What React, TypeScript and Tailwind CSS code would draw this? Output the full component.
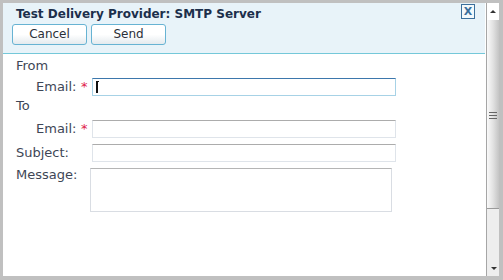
export default function App() {
  const font = { fontFamily: '"DejaVu Sans", Verdana, sans-serif' };

  return (
    <div
      className="w-[503px] h-[280px] bg-[#c0c0c0] pt-[3px] pl-[3px] pr-[4px] pb-[4px] flex overflow-hidden text-[13px] text-[#3e4656]"
      style={font}
    >
      {/* dialog */}
      <div className="flex-1 flex flex-col bg-white">
        <div className="h-[51px] bg-[#e8f3f9] border-b border-[#74c8d9] mr-px relative">
          <div className="pl-[13px] pt-[2px] h-[20px] font-bold text-[12px] text-[#1c2f4b] leading-[18px]">
            Test Delivery Provider: SMTP Server
          </div>
          <div className="flex gap-[4px] pl-[9px] pt-px">
            {["Cancel", "Send"].map((b) => (
              <button
                key={b}
                className="w-[75px] h-[21px] rounded-[3px] border border-[#67b3d3] bg-gradient-to-b from-white via-white to-[#e4eaee] text-[#2b2f38] text-[12px] leading-[17px]"
              >
                {b}
              </button>
            ))}
          </div>
          <div className="absolute left-[458px] top-[1px] w-[14px] h-[15px] border border-[#3b6f9c] bg-[#f3f9fc] text-[#3b6f9c] font-bold text-[11px] leading-[13px] text-center">
            X
          </div>
        </div>

        <div className="pl-[13px] pt-[3px]">
          <div className="h-[18px] leading-[18px]">From</div>

          <div className="flex items-center mt-[3px] h-[18px]">
            <div className="w-[44px] pl-[20px] shrink-0 box-content">Email:</div>
            <span className="text-[#e0214a] w-[12px] pl-[1px] shrink-0">*</span>
            <div className="w-[304px] h-[18px] border border-[#a7d2e6] border-t-[#3d77ac] relative">
              <div className="absolute left-[3px] top-[2px] w-[3px] h-[12px] border-l-2 border-t border-[#111]" />
            </div>
          </div>

          <div className="h-[20px] leading-[20px]">To</div>

          <div className="flex items-center mt-[4px] h-[18px]">
            <div className="w-[44px] pl-[20px] shrink-0 box-content">Email:</div>
            <span className="text-[#e0214a] w-[12px] pl-[1px] shrink-0">*</span>
            <div className="w-[304px] h-[18px] border border-[#dfe4ea] border-t-[#acacac]" />
          </div>

          <div className="flex items-center mt-[6px] h-[18px]">
            <div className="w-[76px] shrink-0">Subject:</div>
            <div className="w-[304px] h-[18px] border border-[#dfe4ea] border-t-[#acacac]" />
          </div>

          <div className="flex mt-[6px]">
            <div className="w-[74px] shrink-0 leading-[14px]">Message:</div>
            <div className="w-[302px] h-[44px] border border-[#d9dde3] border-t-[#b5b5b5]" />
          </div>
        </div>
      </div>

      {/* scrollbar */}
      <div className="w-[13px] flex flex-col bg-[#eeeeee] border-l border-[#a6a6a6]">
        <div className="h-[17px] flex items-center justify-center bg-white">
          <div className="w-0 h-0 border-l-[3px] border-r-[3px] border-b-[3px] border-l-transparent border-r-transparent border-b-[#333]" />
        </div>
        <div className="h-[189px] bg-gradient-to-r from-[#fafafa] via-[#e2e2e2] to-[#c4c4c4] border-b border-[#9a9a9a] flex items-center justify-center">
          <div className="flex flex-col gap-[2px] mt-[2px]">
            <div className="w-[8px] h-px bg-[#666]" />
            <div className="w-[8px] h-px bg-[#666]" />
            <div className="w-[8px] h-px bg-[#666]" />
          </div>
        </div>
        <div className="flex-1 flex items-end justify-center pb-[6px] pl-[2px]">
          <div className="w-0 h-0 border-l-[3px] border-r-[3px] border-t-[3px] border-l-transparent border-r-transparent border-t-[#333]" />
        </div>
      </div>
    </div>
  );
}
